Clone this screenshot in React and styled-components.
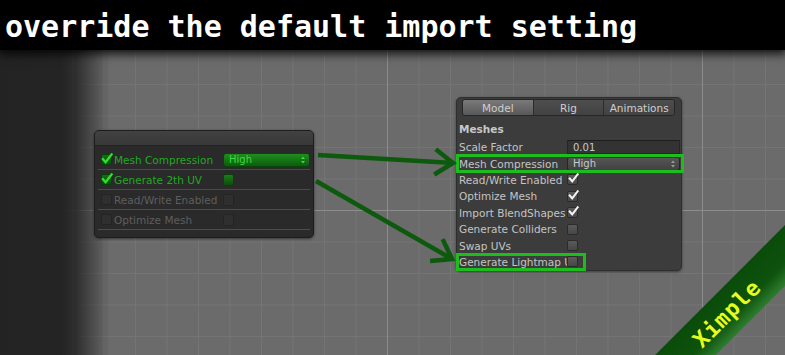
import styled, { createGlobalStyle } from "styled-components";

const GlobalStyle = createGlobalStyle`
  html, body {
    margin: 0;
    padding: 0;
    background: #6b6b6b;
    overflow: hidden;
  }
`;

const UI_FONT = `"DejaVu Sans", "Liberation Sans", sans-serif`;

const Stage = styled.div`
  position: relative;
  width: 785px;
  height: 355px;
  overflow: hidden;
  display: flex;
  flex-direction: column;
  background-color: #6b6b6b;
  background-image:
    linear-gradient(to right, #232323 0, #242424 62px, rgba(36, 36, 36, 0.85) 76px, rgba(36, 36, 36, 0.45) 92px, rgba(36, 36, 36, 0) 110px),
    linear-gradient(to right, #8c8c8c 1px, transparent 1px),
    linear-gradient(to bottom, #8c8c8c 1px, transparent 1px),
    linear-gradient(to right, #747474 1px, transparent 1px),
    linear-gradient(to bottom, #747474 1px, transparent 1px);
  background-size: 100% 100%, 315px 100%, 100% 315px, 31.5px 100%, 100% 31.5px;
  background-position: 0 0, 72px 0, 0 210px, 9px 0, 0 21px;
`;

const TitleBar = styled.header`
  height: 50px;
  flex: none;
  box-sizing: border-box;
  padding: 4px 0 0 5px;
  background: #000;
  box-shadow: 0 2px 9px 2px rgba(0, 0, 0, 0.85);
  color: #fff;
  font-family: "DejaVu Sans Mono", "Liberation Mono", monospace;
  font-weight: bold;
  font-size: 30px;
  line-height: 46px;
  white-space: nowrap;
  position: relative;
  z-index: 2;
`;

const Canvas = styled.main`
  flex: 1;
  display: flex;
  align-items: flex-start;
`;

/* ---------- left node panel ---------- */

const NodePanel = styled.section`
  margin: 80px 0 0 94px;
  width: 220px;
  box-sizing: border-box;
  border: 1px solid #1d1d1d;
  border-radius: 5px;
  background: #2a2a2a;
  box-shadow: 0 1px 3px rgba(0, 0, 0, 0.5);
  overflow: hidden;
  font-family: ${UI_FONT};
  font-size: 10.5px;
`;

const NodeHeader = styled.div`
  height: 14px;
  background: linear-gradient(#424242, #383838);
  border-bottom: 1px solid #222;
`;

const NodeBody = styled.div`
  padding: 4px 3px 7px;
`;

const NodeRow = styled.div`
  height: 19px;
  display: flex;
  align-items: center;
  padding-left: 3px;
  border-bottom: 1px solid ${(p) => (p.$active ? "#1c6a1c" : "#4c4c4c")};
`;

const NodeCheck = styled.span`
  position: relative;
  width: 11px;
  height: 11px;
  flex: none;
  box-sizing: border-box;
  border-radius: 2px;
  background: ${(p) => (p.$active ? "linear-gradient(#137013, #0b4f0b)" : "#2f2f2f")};
  border: 1px solid ${(p) => (p.$active ? "#0a3f0a" : "#242424")};
  margin-right: 2px;
  svg {
    position: absolute;
    left: -1px;
    top: -2px;
  }
`;

const NodeLabel = styled.span`
  width: 109px;
  flex: none;
  color: ${(p) => (p.$active ? "#22a822" : "#5e5e5e")};
  white-space: nowrap;
  overflow: hidden;
`;

const NodeSelect = styled.span`
  width: 87px;
  height: 14px;
  box-sizing: border-box;
  display: flex;
  align-items: center;
  justify-content: space-between;
  padding: 0 4px 0 5px;
  border-radius: 3px;
  background: linear-gradient(#1e8e1e, #0d5c0d);
  border: 1px solid #0a440a;
  color: #3fd83f;
  font-size: 10px;
`;

const NodeToggle = styled.span`
  width: 11px;
  height: 12px;
  border-radius: 2px;
  box-sizing: border-box;
  background: ${(p) => (p.$active ? "linear-gradient(#1c7c1c, #0c4e0c)" : "#2f2f2f")};
  border: 1px solid ${(p) => (p.$active ? "#0a3f0a" : "#242424")};
`;

/* ---------- right inspector panel ---------- */

const Inspector = styled.section`
  margin: 47px 0 0 142px;
  width: 226px;
  box-sizing: border-box;
  border-radius: 5px;
  background: #3c3c3c;
  border: 1px solid #2e2e2e;
  box-shadow: 0 1px 3px rgba(0, 0, 0, 0.45);
  padding: 1px 0 0;
  font-family: ${UI_FONT};
  font-size: 10.5px;
  color: #c4c4c4;
`;

const Tabs = styled.div`
  margin: 0 6px 0 5px;
  height: 17px;
  box-sizing: border-box;
  display: flex;
  border: 1px solid #262626;
  border-radius: 3px;
  overflow: hidden;
`;

const Tab = styled.div`
  flex: 1;
  display: flex;
  align-items: center;
  justify-content: center;
  background: ${(p) => (p.$selected ? "linear-gradient(#7a7a7a, #585858)" : "linear-gradient(#4e4e4e, #424242)")};
  border-left: ${(p) => (p.$first ? "none" : "1px solid #2c2c2c")};
  color: #cfcfcf;
`;

const Section = styled.div`
  height: 16px;
  margin-top: 5px;
  display: flex;
  align-items: center;
  padding-left: 2px;
  font-weight: bold;
  color: #c8c8c8;
`;

const Rows = styled.div`
  margin-top: 2px;
`;

const PropRow = styled.div`
  position: relative;
  height: 16.4px;
  display: flex;
  align-items: center;
  padding-left: 2px;
  &::after {
    content: "";
    display: ${(p) => (p.$highlight ? "block" : "none")};
    position: absolute;
    left: -1px;
    top: -1px;
    bottom: -1px;
    width: ${(p) => p.$highlight || 0}px;
    box-sizing: border-box;
    border: 3px solid #1dbd1d;
    pointer-events: none;
  }
`;

const PropLabel = styled.span`
  width: 108px;
  flex: none;
  white-space: nowrap;
  overflow: hidden;
`;

const Field = styled.span`
  width: 113px;
  height: 14px;
  box-sizing: border-box;
  display: flex;
  align-items: center;
  justify-content: space-between;
  padding: 0 4px 0 5px;
  border-radius: ${(p) => (p.$select ? "3px" : "1px")};
  background: ${(p) => (p.$select ? "linear-gradient(#555, #414141)" : "#333")};
  border: 1px solid #262626;
  border-top-color: ${(p) => (p.$select ? "#303030" : "#1e1e1e")};
  color: #c8c8c8;
  font-size: 10px;
`;

const CheckBox = styled.span`
  position: relative;
  width: 11px;
  height: 11px;
  box-sizing: border-box;
  border-radius: 2px;
  background: linear-gradient(#5a5a5a, #474747);
  border: 1px solid #2b2b2b;
  svg {
    position: absolute;
    left: 0;
    top: -2px;
  }
`;

/* ---------- overlays ---------- */

const ArrowLayer = styled.svg`
  position: absolute;
  left: 0;
  top: 0;
  pointer-events: none;
`;

const Ribbon = styled.div`
  position: absolute;
  left: 617px;
  top: 292px;
  width: 220px;
  height: 43px;
  transform: rotate(-45deg);
  background: linear-gradient(#0b4b0b 0%, #0d520d 62%, #2f7d2f 100%);
  display: flex;
  align-items: center;
  justify-content: center;
  color: #e4ff1e;
  font-family: "DejaVu Sans Mono", "Liberation Mono", monospace;
  font-weight: bold;
  font-size: 22px;
  letter-spacing: 1px;
`;

function Tick({ color, size = 12 }) {
  return (
    <svg width={size} height={size} viewBox="0 0 13 13">
      <path d="M2 6.5 L5 10 L11.5 1.5" fill="none" stroke={color} strokeWidth="2.4" strokeLinecap="square" />
    </svg>
  );
}

function Spinner({ color }) {
  return (
    <svg width="4" height="8" viewBox="0 0 4 8">
      <path d="M0 3 L2 0.5 L4 3 Z M0 5 L2 7.5 L4 5 Z" fill={color} />
    </svg>
  );
}

function arrow(x1, y1, x2, y2, len = 22, ang = 35) {
  const a = Math.atan2(y1 - y2, x1 - x2);
  const r = (ang * Math.PI) / 180;
  const b1 = [x2 + len * Math.cos(a + r), y2 + len * Math.sin(a + r)];
  const b2 = [x2 + len * Math.cos(a - r), y2 + len * Math.sin(a - r)];
  return {
    line: `M${x1} ${y1} L${x2} ${y2}`,
    head: `M${b1[0]} ${b1[1]} L${x2} ${y2} L${b2[0]} ${b2[1]}`,
  };
}

const nodeRows = [
  { label: "Mesh Compression", active: true, value: "select" },
  { label: "Generate 2th UV", active: true, value: "toggle" },
  { label: "Read/Write Enabled", active: false, value: "toggle" },
  { label: "Optimize Mesh", active: false, value: "toggle" },
];

const props = [
  { label: "Scale Factor", kind: "input", value: "0.01" },
  { label: "Mesh Compression", kind: "select", value: "High", highlight: 228 },
  { label: "Read/Write Enabled", kind: "check", checked: true },
  { label: "Optimize Mesh", kind: "check", checked: true },
  { label: "Import BlendShapes", kind: "check", checked: true },
  { label: "Generate Colliders", kind: "check" },
  { label: "Swap UVs", kind: "check" },
  { label: "Generate Lightmap UVs", kind: "check", highlight: 130 },
];

export default function App() {
  const arrows = [arrow(318, 155, 453, 163), arrow(316, 181, 452, 259)];

  return (
    <Stage>
      <GlobalStyle />
      <TitleBar>override the default import setting</TitleBar>

      <Canvas>
        <NodePanel>
          <NodeHeader />
          <NodeBody>
            {nodeRows.map((r) => (
              <NodeRow key={r.label} $active={r.active}>
                <NodeCheck $active={r.active}>{r.active && <Tick color="#2fe02f" />}</NodeCheck>
                <NodeLabel $active={r.active}>{r.label}</NodeLabel>
                {r.value === "select" ? (
                  <NodeSelect>
                    High
                    <Spinner color="#3fd83f" />
                  </NodeSelect>
                ) : (
                  <NodeToggle $active={r.active} />
                )}
              </NodeRow>
            ))}
          </NodeBody>
        </NodePanel>

        <Inspector>
          <Tabs>
            <Tab $selected $first>Model</Tab>
            <Tab>Rig</Tab>
            <Tab>Animations</Tab>
          </Tabs>
          <Section>Meshes</Section>
          <Rows>
            {props.map((p) => (
              <PropRow key={p.label} $highlight={p.highlight}>
                <PropLabel>{p.label}</PropLabel>
                {p.kind === "input" && <Field>{p.value}</Field>}
                {p.kind === "select" && (
                  <Field $select>
                    {p.value}
                    <Spinner color="#9a9a9a" />
                  </Field>
                )}
                {p.kind === "check" && <CheckBox>{p.checked && <Tick color="#f2f2f2" size={11} />}</CheckBox>}
              </PropRow>
            ))}
          </Rows>
        </Inspector>
      </Canvas>

      <ArrowLayer width="785" height="355">
        {arrows.map((a, i) => (
          <g key={i} stroke="#0d590d" strokeWidth="4.5" fill="none">
            <path d={a.line} />
            <path d={a.head} strokeLinejoin="miter" />
          </g>
        ))}
      </ArrowLayer>

      <Ribbon>Ximple</Ribbon>
    </Stage>
  );
}
